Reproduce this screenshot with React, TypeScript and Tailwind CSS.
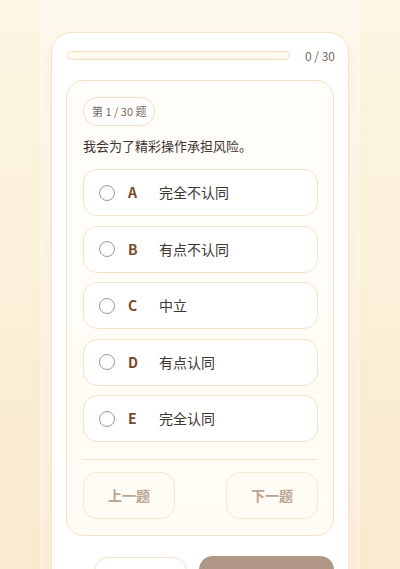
import React from "react";

const options = [
  { k: "A", t: "完全不认同" },
  { k: "B", t: "有点不认同" },
  { k: "C", t: "中立" },
  { k: "D", t: "有点认同" },
  { k: "E", t: "完全认同" },
];

export default function App() {
  return (
    <div
      className="w-[400px] h-[569px] overflow-hidden bg-gradient-to-b from-[#fdf6e2] to-[#f9ead0]"
      style={{ fontFamily: '"Noto Sans CJK SC", "Noto Sans", sans-serif' }}
    >
      <div className="mx-auto w-[320px] h-full bg-gradient-to-b from-[#fefaee] to-[#fcf2e0] px-[11px] pt-[32px]">
        <div className="rounded-[20px] border border-[#f3e4c9] bg-white shadow-[0_6px_20px_rgba(220,190,140,0.18)] pl-[14px] pr-[14px] pt-[13px] pb-[40px] h-[600px]">
          <div className="flex items-center h-[19px] pl-px -mr-px">
            <div className="flex-1 h-[9px] rounded-full border border-[#f0dcbc] bg-[#fffaf0]" />
            <span className="ml-[15px] text-[12px] leading-[18px] text-[#7a6b5e]">0 / 30</span>
          </div>
          <div className="mt-[15px] rounded-[17px] border border-[#f3e4c9] bg-gradient-to-b from-[#fffdf9] to-[#fffcf4] pl-[16px] pr-[15px] pt-[16px] pb-[16px]">
            <div className="inline-flex items-center h-[29px] px-[8px] rounded-full border border-[#f1dfc2] bg-white text-[11px] text-[#7c6b5d]">
              第 1 / 30 题
            </div>
            <div className="mt-[10px] text-[13px] leading-[20px] text-[#3d3530]">
              我会为了精彩操作承担风险。
            </div>
            <div className="mt-[13px] flex flex-col gap-[9.5px]">
              {options.map((o) => (
                <div
                  key={o.k}
                  className="flex items-center h-[47px] rounded-[14px] border border-[#f3e4c9] bg-white pl-[15px]"
                >
                  <span className="w-[16px] h-[16px] rounded-full border-[1.5px] border-[#999999] bg-white" />
                  <span className="ml-[13px] w-[10px] text-[14px] font-bold text-[#7a4a28]">{o.k}</span>
                  <span className="ml-[21px] text-[14px] text-[#3d3530]">{o.t}</span>
                </div>
              ))}
            </div>
            <div className="mt-[17px] h-px bg-[#f2e2c6]" />
            <div className="mt-[12px] flex justify-between">
              <div className="w-[92px] h-[47px] rounded-[14px] border border-[#f5e8d2] bg-[#fffcf5] flex items-center justify-center text-[14px] font-bold text-[#b9a391]">
                上一题
              </div>
              <div className="w-[92px] h-[47px] rounded-[14px] border border-[#f5e8d2] bg-[#fffcf5] flex items-center justify-center text-[14px] font-bold text-[#b9a391]">
                下一题
              </div>
            </div>
          </div>
          <div className="mt-[21px] flex justify-end gap-[12px]">
            <div className="w-[93px] h-[47px] rounded-[14px] border border-[#f3e1c4] bg-white" />
            <div className="w-[135px] h-[47px] -mt-px rounded-[14px] bg-[#b19785]" />
          </div>
        </div>
      </div>
    </div>
  );
}
